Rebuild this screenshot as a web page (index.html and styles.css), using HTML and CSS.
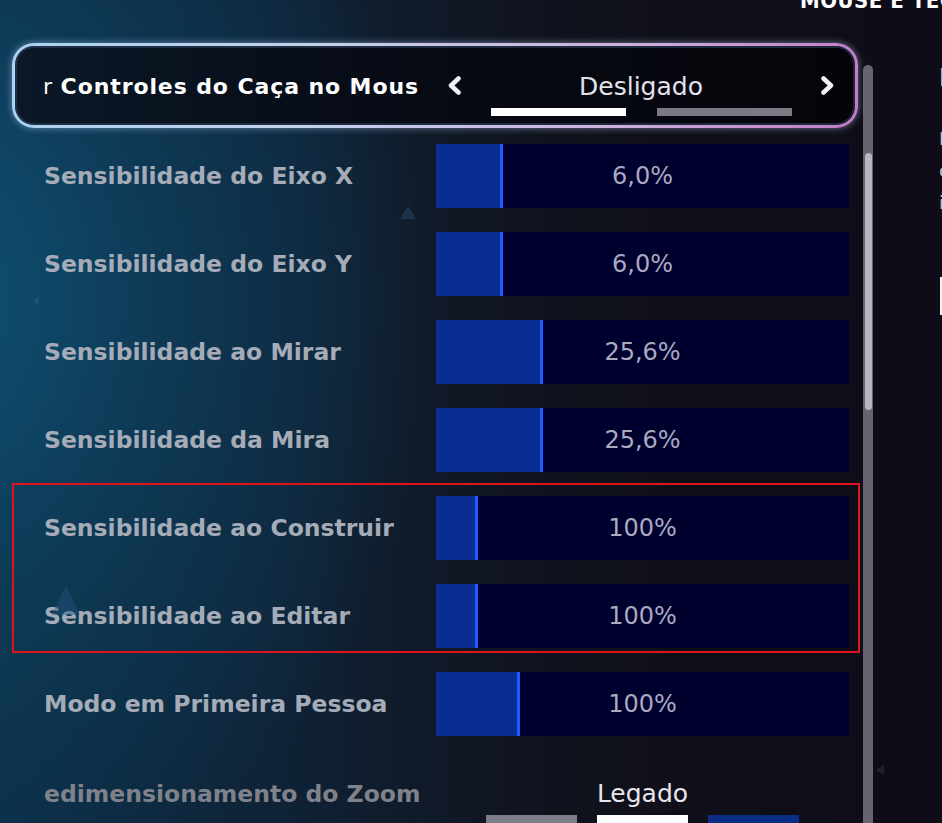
FILE: index.html
```html
<!DOCTYPE html>
<html lang="pt">
<head>
<meta charset="utf-8">
<title>Mouse e Teclado</title>
<link rel="stylesheet" href="styles.css">
</head>
<body>
<div class="screen">
  <div class="topbar"><span class="section-title">MOUSE E TECLADO</span></div>
  <div class="layout">
    <main class="panel">
      <div class="selector-box">
        <div class="sel-title"><span class="thin">r</span> Controles do Caça no Mous</div>
        <span class="chev"><svg viewBox="0 0 15 19" width="15" height="19"><path d="M11.5 2.5 L4 9.5 L11.5 16.5" /></svg></span>
        <div class="sel-center">
          <div class="sel-value">Desligado</div>
          <div class="dots"><span class="dot on"></span><span class="dot"></span></div>
        </div>
        <span class="chev"><svg viewBox="0 0 15 19" width="15" height="19"><path d="M3.5 2.5 L11 9.5 L3.5 16.5" /></svg></span>
      </div>

      <div class="rows">
        <div class="row"><div class="label">Sensibilidade do Eixo X</div><div class="bar"><div class="fill" style="width:67px"></div><div class="value">6,0%</div></div></div>
        <div class="row"><div class="label">Sensibilidade do Eixo Y</div><div class="bar"><div class="fill" style="width:67px"></div><div class="value">6,0%</div></div></div>
        <div class="row"><div class="label">Sensibilidade ao Mirar</div><div class="bar"><div class="fill" style="width:107px"></div><div class="value">25,6%</div></div></div>
        <div class="row"><div class="label">Sensibilidade da Mira</div><div class="bar"><div class="fill" style="width:107px"></div><div class="value">25,6%</div></div></div>
        <div class="row"><div class="label">Sensibilidade ao Construir</div><div class="bar"><div class="fill" style="width:42px"></div><div class="value">100%</div></div></div>
        <div class="row"><div class="label">Sensibilidade ao Editar</div><div class="bar"><div class="fill" style="width:42px"></div><div class="value">100%</div></div></div>
        <div class="row"><div class="label">Modo em Primeira Pessoa</div><div class="bar"><div class="fill" style="width:84px"></div><div class="value">100%</div></div></div>
        <div class="row row-select">
          <div class="label dim">edimensionamento do Zoom</div>
          <div class="opt">
            <div class="opt-value">Legado</div>
            <div class="opt-dots"><span class="odot grey"></span><span class="odot white"></span><span class="odot blue"></span></div>
          </div>
        </div>
        <div class="highlight"></div>
      </div>
    </main>

    <div class="scroll"><div class="thumb"></div></div>

    <aside class="info">
      <div class="info-title">Desativar</div>
      <p class="info-text">Inverte os<br>controles<br>invertidos</p>
      <div class="info-btn"></div>
    </aside>
  </div>

  <span class="tri t1"></span>
  <span class="tri t2"></span>
  <span class="tri t3"></span>
  <span class="tri t4"></span>
</div>
</body>
</html>
```

FILE: styles.css
```css
* { box-sizing: border-box; }
html, body { margin: 0; padding: 0; }
body {
  width: 942px;
  height: 823px;
  overflow: hidden;
  background: #0e0d17;
  font-family: "DejaVu Sans", "Liberation Sans", sans-serif;
}
.screen {
  position: relative;
  width: 942px;
  height: 823px;
  overflow: hidden;
  background:
    radial-gradient(ellipse 580px 760px at -60px 300px, rgba(15,82,118,0.95) 0%, rgba(14,64,94,0.7) 40%, rgba(14,40,62,0) 85%),
    linear-gradient(90deg, #0c2c44 0%, #0f2236 30%, #101a28 45%, #10131e 58%, #0f0f19 72%, #0e0d17 100%);
}
.topbar {
  height: 43px;
  padding-left: 800px;
  white-space: nowrap;
  overflow: hidden;
}
.section-title {
  display: block;
  margin-top: -10px;
  font-family: "DejaVu Sans Condensed", "DejaVu Sans", sans-serif;
  font-weight: bold;
  font-size: 22px;
  line-height: 22px;
  color: #ffffff;
  letter-spacing: 0.5px;
}
.layout {
  display: grid;
  grid-template-columns: 862px 14px 66px;
}
.panel { position: relative; }

/* selector box */
.selector-box {
  margin-left: 12px;
  width: 846px;
  height: 85px;
  border: 3px solid transparent;
  border-radius: 22px;
  background:
    linear-gradient(90deg, #0b1827 0%, #070b15 45%, #050409 100%) padding-box,
    linear-gradient(100deg, #a9d3f1 0%, #c3d2ea 35%, #cdb3dc 70%, #c27cc6 100%) border-box;
  box-shadow: 0 0 6px 1px rgba(170, 190, 235, 0.45), inset 0 0 0 2px rgba(50, 70, 100, 0.55);
  display: flex;
  align-items: center;
}
.sel-title {
  width: 432px;
  padding-left: 28px;
  padding-top: 2px;
  white-space: nowrap;
  overflow: hidden;
  color: #ffffff;
  font-weight: bold;
  font-size: 22px;
  line-height: 22px;
  letter-spacing: 0.9px;
}
.sel-title .thin { font-weight: normal; letter-spacing: 0; }
.chev { width: 15px; height: 19px; display: block; }
.chev svg { display: block; }
.chev path { fill: none; stroke: #f2f2f6; stroke-width: 4.5; stroke-linejoin: round; stroke-linecap: round; }
.sel-center {
  width: 358px;
  align-self: stretch;
  padding-top: 26px;
  display: flex;
  flex-direction: column;
  align-items: center;
}
.sel-value {
  font-size: 25px;
  line-height: 30px;
  color: #e2e2ea;
}
.dots { display: flex; gap: 31px; margin-top: 6px; }
.dot { width: 135px; height: 8px; background: #7a7a84; }
.dot.on { background: #ffffff; }

/* rows */
.rows {
  position: relative;
  margin-top: 16px;
  display: flex;
  flex-direction: column;
  gap: 24px;
}
.row {
  display: flex;
  align-items: center;
  height: 64px;
}
.label {
  width: 436px;
  padding-left: 44px;
  white-space: nowrap;
  overflow: hidden;
  color: #a5acb7;
  font-weight: bold;
  font-size: 23.5px;
  line-height: 28px;
}
.label.dim { color: #7f828b; }
.bar {
  width: 413px;
  height: 64px;
  background: #00002f;
  display: grid;
}
.fill {
  grid-area: 1 / 1;
  justify-self: start;
  height: 64px;
  background: #0a2d92;
  border-right: 3px solid #1f5cff;
}
.value {
  grid-area: 1 / 1;
  align-self: center;
  justify-self: center;
  font-size: 24px;
  line-height: 28px;
  color: #a9a9c1;
}
.row-select { align-items: baseline; }
.opt {
  width: 413px;
  padding-top: 19px;
  display: flex;
  flex-direction: column;
  align-items: center;
}
.opt-value {
  font-size: 25px;
  line-height: 30px;
  color: #e6e6ee;
}
.opt-dots { display: flex; gap: 20px; margin-top: 6px; }
.odot { width: 91px; height: 10px; }
.odot.grey { background: #7c7c86; }
.odot.white { background: #ffffff; }
.odot.blue { background: #0a2e86; }
.highlight {
  position: absolute;
  left: 12px;
  top: 339px;
  width: 848px;
  height: 170px;
  border: 2px solid #e0121a;
}

/* scrollbar */
.scroll {
  margin-top: 22px;
  margin-left: 1px;
  width: 10px;
  height: 758px;
  background: #67646f;
  border-radius: 5px 5px 0 0;
  padding-top: 88px;
  padding-left: 1.5px;
}
.thumb {
  width: 7.5px;
  height: 257px;
  background: #b8b6c1;
  border-radius: 4px;
}

/* right info column (mostly off-screen) */
.info {
  padding-left: 63px;
  padding-top: 21px;
  white-space: nowrap;
  overflow: hidden;
}
.info-title {
  font-weight: bold;
  font-size: 24px;
  line-height: 28px;
  color: #cfd0d8;
}
.info-text {
  margin: 31px 0 0;
  font-size: 18px;
  line-height: 32px;
  color: #c2c3cb;
}
.info-btn {
  margin-top: 58px;
  margin-left: 1px;
  width: 60px;
  height: 38px;
  background: #f2f2f4;
}

/* decorative triangles */
.tri {
  position: absolute;
  width: 0;
  height: 0;
  border-style: solid;
  border-color: transparent;
}
.t1 { left: 400px; top: 206px; border-width: 0 8px 13px 8px; border-bottom-color: rgba(40, 70, 100, 0.55); }
.t2 { left: 33px; top: 297px; border-width: 4px 6px 4px 0; border-right-color: rgba(40, 90, 130, 0.6); }
.t3 { left: 52px; top: 585px; border-width: 0 14px 30px 14px; border-bottom-color: rgba(35, 85, 125, 0.45); }
.t4 { left: 876px; top: 765px; border-width: 5px 8px 5px 0; border-right-color: rgba(40, 40, 60, 0.7); }
```
